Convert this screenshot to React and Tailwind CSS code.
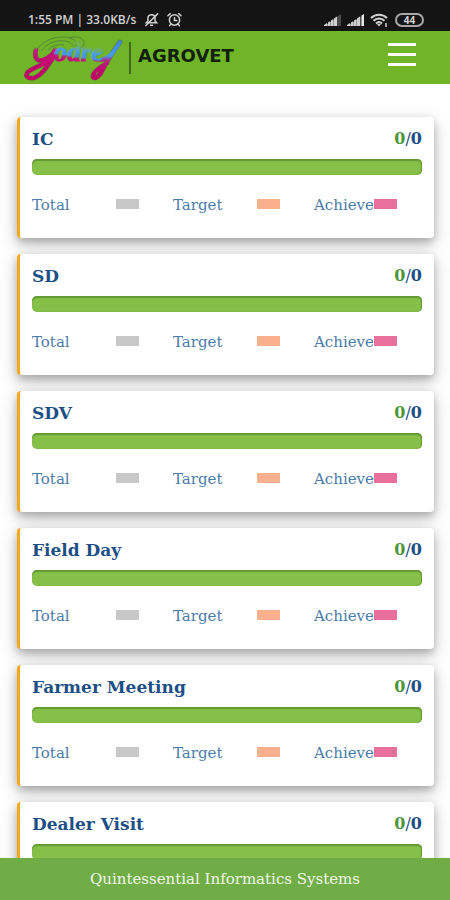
import React from 'react';

const activities = [
  { id: 1, name: 'IC', done: 0, total: 0 },
  { id: 2, name: 'SD', done: 0, total: 0 },
  { id: 3, name: 'SDV', done: 0, total: 0 },
  { id: 4, name: 'Field Day', done: 0, total: 0 },
  { id: 5, name: 'Farmer Meeting', done: 0, total: 0 },
  { id: 6, name: 'Dealer Visit', done: 0, total: 0 },
];

const legend = [
  { label: 'Total', color: 'bg-[#c8c8c8]' },
  { label: 'Target', color: 'bg-[#fab08c]' },
  { label: 'Achieve', color: 'bg-[#e8709a]' },
];

const SignalIcon = ({ full }) => (
  <svg width="17" height="12" viewBox="0 0 17 12" aria-hidden="true">
    <path d="M0 12L17 0V12Z" fill="#4a4a4a" />
    <path d="M0 12V11L3 9V12ZM4 12V8.6L6 7.2V12ZM7 12V6.6L9 5.2V12ZM10 12V4.5L13 2.6V12Z" fill="#cfcfcf" />
    <path d="M1 12L13 3V12Z" fill="#cfcfcf" opacity="0.6" />
    {full && <path d="M14.5 12V1.6L17 0V12Z" fill="#e6e6e6" />}
  </svg>
);

const StatusBar = () => (
  <div className="flex h-[31px] shrink-0 items-center justify-between bg-[#141414] pr-[26px] pl-7 pt-2 font-['Open_Sans',sans-serif] text-[12px] font-semibold text-[#d0d0d0]">
    <div className="flex items-center gap-2">
      <span className="whitespace-nowrap">1:55 PM | 33.0KB/s</span>
      <svg width="15" height="15" viewBox="0 0 16 16" fill="none" stroke="#d0d0d0" strokeWidth="1.6" strokeLinecap="round" aria-hidden="true">
        <path d="M2.5 11.5L4.2 9.5V6.5C4.2 4.2 6 3 8 3S11.8 4.2 11.8 6.5V9.5L13.5 11.5Z" />
        <path d="M7 14H9M14.5 2L2 14.5" />
      </svg>
      <svg width="15" height="15" viewBox="0 0 16 16" fill="none" stroke="#d0d0d0" strokeWidth="1.6" strokeLinecap="round" aria-hidden="true">
        <circle cx="8" cy="8.5" r="5.5" />
        <path d="M1 4L3.5 1.8M15 4L12.5 1.8M8 6V9L10.5 9M4 13L2.8 14.5M12 13L13.2 14.5" />
      </svg>
    </div>
    <div className="flex items-center gap-[6px]">
      <SignalIcon />
      <SignalIcon full />
      <svg width="19" height="14" viewBox="0 0 19 14" fill="none" stroke="#d0d0d0" strokeWidth="2" aria-hidden="true">
        <path d="M1 5C5.5 0.5 12.5 0.5 17 5M3.5 7.8C6.5 4.8 11.5 4.8 14.5 7.8M6 10.5C7.8 8.8 10.2 8.8 12 10.5" />
        <path d="M7 11L9 13.5L11 11Z" fill="#d0d0d0" stroke="none" />
        <path d="M16 10V14" strokeWidth="1.5" />
      </svg>
      <span className="flex h-[14px] w-[29px] items-center justify-center rounded-full border-2 border-[#a8a8a8] text-[10px] leading-none font-bold">
        44
      </span>
    </div>
  </div>
);

const BrandLogo = () => (
  <svg width="104" height="48" viewBox="22 34 104 48" role="img" aria-label="Godrej">
    <defs>
      <linearGradient id="brand" gradientUnits="userSpaceOnUse" x1="75" y1="44" x2="71" y2="70">
        <stop offset="0" stopColor="#74b344" />
        <stop offset="0.14" stopColor="#66a78a" />
        <stop offset="0.24" stopColor="#4a9fdc" />
        <stop offset="0.46" stopColor="#4a90e2" />
        <stop offset="0.54" stopColor="#c2187c" />
        <stop offset="1" stopColor="#c4006c" />
      </linearGradient>
      <linearGradient id="brandTail" gradientUnits="userSpaceOnUse" x1="0" y1="40" x2="0" y2="68">
        <stop offset="0.25" stopColor="#74b344" />
        <stop offset="0.36" stopColor="#c2187c" />
        <stop offset="1" stopColor="#c4006c" />
      </linearGradient>
      <linearGradient id="brandFlick" gradientUnits="userSpaceOnUse" x1="0" y1="40" x2="0" y2="72">
        <stop offset="0" stopColor="#3f86c8" />
        <stop offset="0.5" stopColor="#4a9be6" />
        <stop offset="0.64" stopColor="#b8247e" />
        <stop offset="1" stopColor="#c4006c" />
      </linearGradient>
    </defs>
    {/* crown sweep */}
    <g fill="none" stroke="#55863a" strokeWidth="1">
      <path d="M37 50C41 42 53 36 66 37C73 38 78 42 78 46" />
      <path d="M41 51C46 44 55 40 64 41C69 41 73 44 74 47" />
      <path d="M68 38C76 35 84 38 84 43C84 48 78 49 76 46C75 42 79 40 81 43" />
      <path d="M48 50C52 46 58 44 64 45" />
    </g>
    <g fill="none" strokeLinecap="round" strokeLinejoin="round">
      <g stroke="#4c3a3c" opacity="0.5">
        <path d="M36 50C34 56 36 62 43 60C49 58 53 54 55 50L54 55C50 64 42 75 34 78C28 79 24 76 28 72C34 67 43 65 52 60" strokeWidth="4.8" />
        <path d="M120 42C115 49 108 59 103 69C100 76 95 80 93 77C92 73 99 68 107 63" strokeWidth="4.8" />
      </g>
      <path d="M36 50C34 56 36 62 43 60C49 58 53 54 55 50L54 55C50 64 42 75 34 78C28 79 24 76 28 72C34 67 43 65 52 60" stroke="url(#brandTail)" strokeWidth="4" />
      <path d="M101 60C108 59 115 51 120 42C115 49 108 59 103 69C100 76 95 80 93 77C92 73 99 68 107 63" stroke="url(#brandFlick)" strokeWidth="4" />
    </g>
    <text x="54" y="61" fontFamily="Liberation Serif, serif" fontStyle="italic" fontWeight="bold" fontSize="27" fill="url(#brand)" stroke="url(#brand)" strokeWidth="1">
      odre
    </text>
  </svg>
);

const Header = () => (
  <header className="flex h-[53px] shrink-0 items-center justify-between bg-[#70b528] pr-[34px] pl-[22px]">
    <div className="flex items-center">
      <BrandLogo />
      <span className="ml-[3px] h-8 w-[2px] bg-[#3f6a20]" />
      <span className="pb-1 pl-[7px] font-['DejaVu_Sans',sans-serif] text-[18px] leading-6 font-bold text-[#10200a]">AGROVET</span>
    </div>
    <button type="button" aria-label="Menu" className="mb-1.5 flex w-7 flex-col gap-[7px]">
      <span className="h-[3px] w-full bg-white" />
      <span className="h-[3px] w-full bg-white" />
      <span className="h-[3px] w-full bg-white" />
    </button>
  </header>
);

const ActivityCard = ({ item }) => (
  <section className="h-[121px] shrink-0 rounded-[4px] border-l-[3px] border-[#f5a81c] bg-white px-3 pt-[10px] shadow-[0_4px_8px_0_rgba(0,0,0,0.25),0_6px_20px_0_rgba(0,0,0,0.18)]">
    <div className="flex items-center justify-between text-[17px] leading-6 font-bold text-[#1c4f85]">
      <h2>{item.name}</h2>
      <p className="text-[16px]">
        <span className="text-[#4b9638]">{item.done}</span>
        <span className="font-normal">/</span>
        {item.total}
      </p>
    </div>
    <div className="mt-2 h-4 rounded-[5px] bg-[#86c049] shadow-[inset_0_2px_1px_#639a34,inset_-1px_0_1px_#639a34]" />
    <ul className="mt-5 grid grid-cols-[141px_141px_1fr] text-[15px] leading-5 text-[#4a7ca8]">
      {legend.map((entry) => (
        <li key={entry.label} className="flex">
          <span className="min-w-[59px]">{entry.label}</span>
          <span className={`mt-1 h-[10px] w-[23px] ${entry.color} ${entry.label === 'Achieve' ? '' : 'ml-[25px]'}`} />
        </li>
      ))}
    </ul>
  </section>
);

const App = () => {
  return (
    <div className="flex h-screen flex-col bg-white font-['DejaVu_Serif',serif]">
      <StatusBar />
      <Header />
      <main className="flex min-h-0 flex-1 flex-col gap-4 overflow-y-auto pt-[33px] pr-4 pl-[17px] [scrollbar-width:none]">
        {activities.map((item) => (
          <ActivityCard key={item.id} item={item} />
        ))}
      </main>
      <footer className="flex h-[42px] shrink-0 items-center justify-center bg-[#70ad47] text-[15px] text-[#f0f7ea]">
        Quintessential Informatics Systems
      </footer>
    </div>
  );
};

export default App;
